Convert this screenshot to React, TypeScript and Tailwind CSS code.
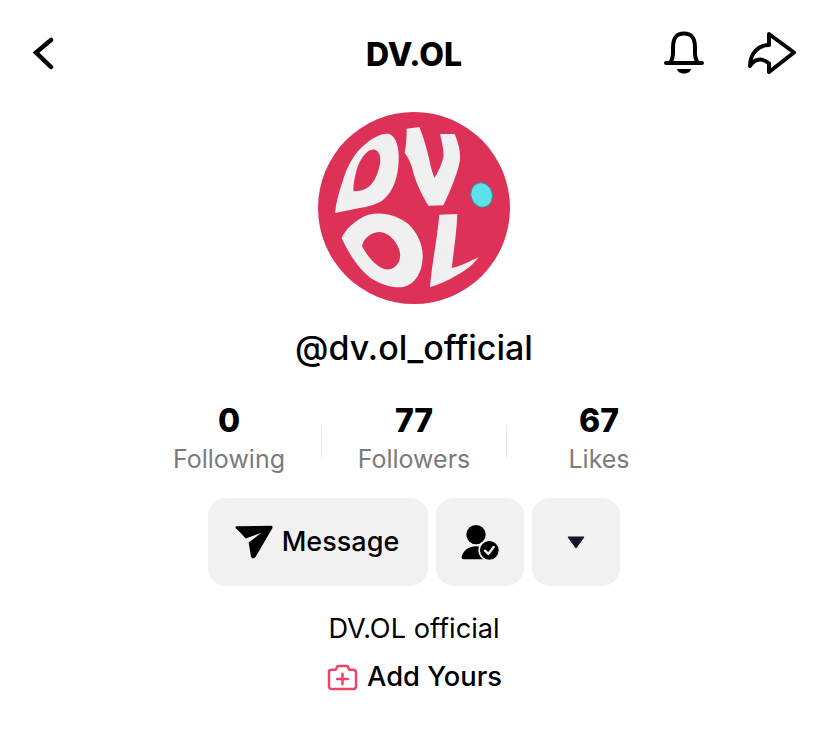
const Logo = () => (
  <svg viewBox="54 42 576 576" className="w-[192px] h-[192px]">
    <circle cx="342" cy="330" r="288" fill="#de3158" />
    <path
      fill="#f0f0f0"
      fillRule="evenodd"
      d="M105 345C108 315 116 285 128 250C140 210 160 165 200 135C225 115 250 105 268 108C290 118 298 150 296 190C294 235 282 278 250 305C225 324 190 327 150 336ZM160 280C195 280 215 268 230 232C243 200 248 165 225 155C200 150 180 185 170 215C163 240 160 260 160 280Z"
    />
    <path
      fill="#f0f0f0"
      d="M320 92L358 87C370 115 380 150 388 185C393 210 398 228 404 240C415 220 428 195 431 172C430 150 425 128 420 108L464 108C475 135 482 160 480 185C476 215 455 270 430 322L385 323C365 290 345 250 335 205C330 190 322 175 314 165C318 145 320 118 320 92Z"
    />
    <path
      fill="#f0f0f0"
      fillRule="evenodd"
      d="M125 420C135 395 165 365 205 350C245 340 290 350 325 378C352 405 370 440 368 480C366 522 347 558 310 567C280 571 245 560 215 542C178 516 145 465 125 420ZM186 445C200 470 225 505 255 514C285 518 304 492 300 465C295 435 270 405 240 402C215 402 190 420 186 445Z"
    />
    <path
      fill="#f0f0f0"
      d="M418 350L472 348C470 400 462 455 455 510C480 505 510 490 536 477C520 500 500 515 470 532C445 548 415 560 390 568C395 500 412 420 418 350Z"
    />
    <ellipse cx="545" cy="291" rx="32" ry="37" transform="rotate(-18 545 291)" fill="#5ae2e8" stroke="#3f8f9f" strokeWidth="3" />
  </svg>
);

const PlaneIcon = () => (
  <svg viewBox="105 108 114 104" className="w-[38px] h-[35px] -ml-[2px]">
    <path
      fill="#000"
      d="M110 111L214 110Q220 111 217 117L167 203Q159 213 153 203L146 160L184 131L137 148Q122 130 108 118Q104 112 110 111Z"
    />
  </svg>
);

const FollowingIcon = () => (
  <svg viewBox="780 100 120 114" className="w-[40px] h-[38px]">
    <circle cx="828" cy="135" r="29" fill="#000" />
    <path fill="#000" d="M785 203C787 185 805 170 828 170C850 170 860 180 862 205L860 209H790Q785 209 785 203Z" />
    <circle cx="868" cy="182" r="33" fill="#f1f1f2" />
    <circle cx="868" cy="182" r="28" fill="#000" />
    <path d="M855 183L865 193L881 172" fill="none" stroke="#f1f1f2" strokeWidth="7" strokeLinecap="round" strokeLinejoin="round" />
  </svg>
);

const stats = [
  { value: "0", label: "Following" },
  { value: "77", label: "Followers" },
  { value: "67", label: "Likes" },
];

export default function App() {
  return (
    <div className="h-[729px] bg-white overflow-hidden flex flex-col items-center font-['Inter',sans-serif] text-black">
      <header className="w-full h-[110px] grid grid-cols-[1fr_auto_1fr] items-center px-[30px]">
        <svg viewBox="0 0 26 36" className="w-[26px] h-[36px]">
          <path d="M21 3L6 15.500L21 30" fill="none" stroke="#000" strokeWidth="4.500" strokeLinecap="round" strokeLinejoin="miter" />
        </svg>
        <h1 className="text-[32px] font-extrabold leading-none">DV.OL</h1>
        <div className="flex justify-end items-center gap-[40px]">
          <svg viewBox="0 0 44 54" className="w-[44px] h-[54px]">
            <path
              d="M4 35H40M8 35C12 30 11 24 11 20C11 10 14 5.500 22 5.500C30 5.500 33 10 33 20C33 24 32 30 36 35"
              fill="none"
              stroke="#000"
              strokeWidth="4"
              strokeLinecap="round"
              strokeLinejoin="round"
            />
            <path d="M15 41H29C28 47 16 47 15 41Z" fill="#000" />
          </svg>
          <svg viewBox="0 0 52 54" className="w-[52px] h-[54px]">
            <path
              d="M23 6L48 24.500L23 44V35.500C16 29 8 31 4 38C4 26 12 17 23 17Z"
              fill="none"
              stroke="#000"
              strokeWidth="4"
              strokeLinejoin="round"
            />
          </svg>
        </div>
      </header>

      <div className="mt-[2px]">
        <Logo />
      </div>

      <h2 className="mt-[24px] h-[40px] leading-[40px] text-[34px] font-medium">@dv.ol_official</h2>

      <div className="mt-[33px] flex items-center">
        {stats.map((stat, i) => (
          <div key={stat.label} className="flex items-center">
            {i > 0 && <div className="w-px h-[32px] bg-[#e6e6e6] mt-[5px]" />}
            <div className="w-[184px] flex flex-col items-center">
              <span className="h-[40px] leading-[40px] text-[32px] font-extrabold">{stat.value}</span>
              <span className="h-[36px] leading-[36px] text-[25px] text-[#7b7b7d]">{stat.label}</span>
            </div>
          </div>
        ))}
      </div>

      <div className="mt-[21px] flex gap-2">
        <button className="w-[220px] h-[88px] rounded-[18px] bg-[#f1f1f2] flex items-center justify-center gap-[9px] text-[27px] font-medium">
          <PlaneIcon />
          Message
        </button>
        <button className="w-[88px] h-[88px] rounded-[18px] bg-[#f1f1f2] flex items-center justify-center">
          <FollowingIcon />
        </button>
        <button className="w-[88px] h-[88px] rounded-[18px] bg-[#f1f1f2] flex items-center justify-center">
          <svg viewBox="0 0 18 13" className="w-[18px] h-[13px]">
            <path d="M1 1H17L9 12Z" fill="#16162a" stroke="#16162a" strokeLinejoin="round" />
          </svg>
        </button>
      </div>

      <p className="mt-[25px] h-[36px] leading-[36px] text-[27.200px]">DV.OL official</p>

      <div className="mt-[12px] h-[36px] flex items-center gap-[9px]">
        <svg viewBox="0 0 32 28" className="w-[31px] h-[27px] ml-[1px]">
          <path
            d="M2 8Q2 6 5 6H9L11 2H21L23 6H27Q30 6 30 9V23Q30 26 27 26H5Q2 26 2 23Z"
            fill="none"
            stroke="#e8476a"
            strokeWidth="2.600"
            strokeLinejoin="round"
          />
          <path d="M16 10V21M10.500 15.500H21.500" fill="none" stroke="#e8476a" strokeWidth="2.600" strokeLinecap="round" />
        </svg>
        <span className="text-[27.300px] font-medium leading-[36px]">Add Yours</span>
      </div>
    </div>
  );
}
